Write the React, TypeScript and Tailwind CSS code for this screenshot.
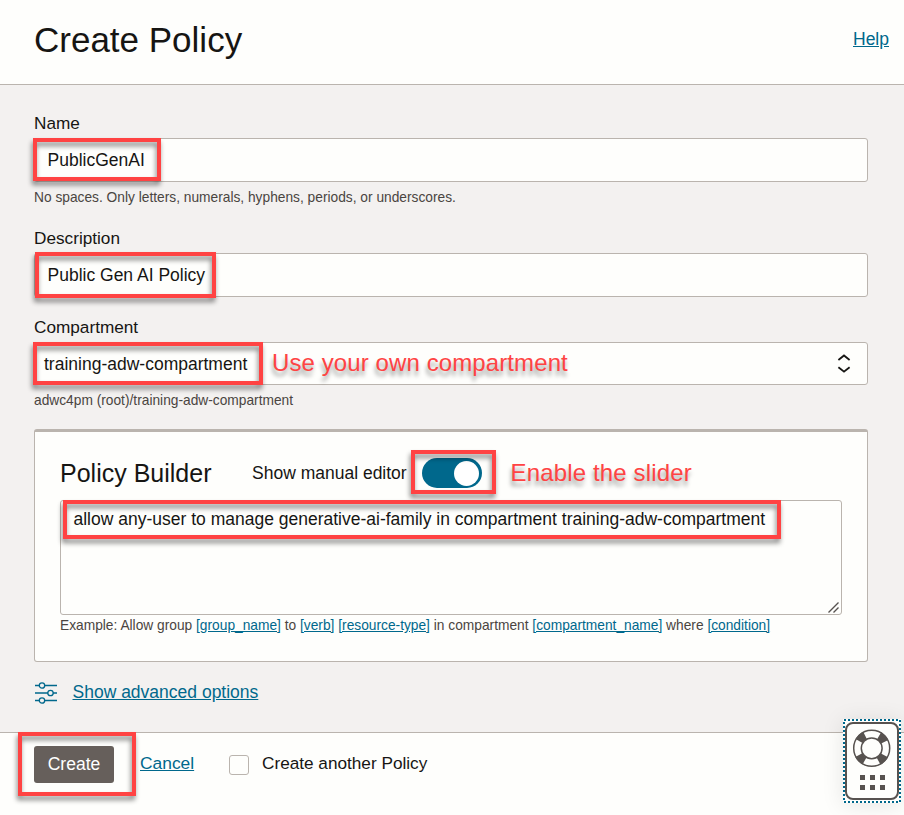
import type { ReactNode } from "react";

function Marker({ className }: { className: string }) {
  return (
    <div
      className={`pointer-events-none absolute border-4 border-[#ff4343] drop-shadow-[-1px_4px_2.5px_rgba(0,0,0,0.48)] ${className}`}
    />
  );
}

function Note({ className, children }: { className: string; children: ReactNode }) {
  return (
    <span
      className={`pointer-events-none absolute text-[24px] leading-7 whitespace-nowrap text-[#ff4343] [text-shadow:-1px_5px_4px_rgba(0,0,0,0.4)] ${className}`}
    >
      {children}
    </span>
  );
}

function Label({ children }: { children: ReactNode }) {
  return <label className="mb-[5px] block text-[17.2px] leading-5">{children}</label>;
}

function Hint({ children }: { children: ReactNode }) {
  return <p className="mt-1.5 text-[13.75px] leading-5 text-[#4a4541]">{children}</p>;
}

function Token({ children }: { children: ReactNode }) {
  return <a className="text-[#00688c] underline">{children}</a>;
}

function HelpWidget() {
  return (
    <div className="absolute top-[719px] left-[843px] h-[84px] w-[58px] shadow-[0_2px_22px_rgba(22,21,19,0.1)]">
      <svg width="58" height="84" viewBox="0 0 58 84" fill="none">
        <rect width="58" height="84" fill="#fefefc" />
        <rect x="1" y="1" width="56" height="82" stroke="#00688c" strokeWidth="2" strokeDasharray="2 2" />
        <rect x="3" y="4" width="52" height="76" rx="7" fill="#fefefc" stroke="#57524f" strokeWidth="2" />
        <circle cx="28.7" cy="29.3" r="14.6" stroke="#57524f" strokeWidth="8" strokeDasharray="8.2 14.73" strokeDashoffset="-7.37" />
        <circle cx="28.7" cy="29.3" r="18" stroke="#57524f" strokeWidth="1.5" />
        <circle cx="28.7" cy="29.3" r="10.4" stroke="#57524f" strokeWidth="1.5" />
        <g fill="#57524f">
          <rect x="17" y="56" width="5" height="5" />
          <rect x="27" y="56" width="5" height="5" />
          <rect x="37" y="56" width="5" height="5" />
          <rect x="17" y="66" width="5" height="5" />
          <rect x="27" y="66" width="5" height="5" />
          <rect x="37" y="66" width="5" height="5" />
        </g>
      </svg>
    </div>
  );
}

export default function App() {
  return (
    <div className="relative flex h-[815px] w-[904px] flex-col overflow-hidden bg-[#fefefc] font-['Liberation_Sans',Arial,sans-serif] text-[17.5px] leading-6 text-[#161513]">
      <header className="flex h-[85px] items-start justify-between border-b border-[#bab4ae] pr-[15px] pl-[34px]">
        <h1 className="mt-5 text-[35px] leading-10">Create Policy</h1>
        <a className="mt-[27px] text-[#00688c] underline">Help</a>
      </header>

      <main className="h-[648px] border-b border-[#bab4ae] bg-[#f3f1f0] px-[34px] pt-7 pr-9">
        <div className="relative">
          <Label>Name</Label>
          <div className="flex h-11 items-center rounded-[3px] border border-[#bab4ae] bg-[#fefefc] px-[12.5px]">PublicGenAI</div>
          <Marker className="top-[25px] -left-px h-[43px] w-32" />
          <Hint>No spaces. Only letters, numerals, hyphens, periods, or underscores.</Hint>
        </div>

        <div className="relative mt-5">
          <Label>Description</Label>
          <div className="flex h-11 items-center rounded-[3px] border border-[#bab4ae] bg-[#fefefc] px-[12.5px]">Public Gen AI Policy</div>
          <Marker className="top-6 left-px h-[46px] w-[181px]" />
        </div>

        <div className="relative mt-5">
          <Label>Compartment</Label>
          <div className="flex h-[43px] items-center justify-between rounded-[3px] border border-[#bab4ae] bg-[#fefefc] pr-4 pl-[9px]">
            <span>training-adw-compartment</span>
            <svg width="14" height="20" viewBox="0 0 14 20" fill="none" stroke="#161513" strokeWidth="1.8">
              <path d="M1.4 6 7 1.5 12.6 6M1.4 13.2 7 17.6l5.6-4.4" />
            </svg>
          </div>
          <Marker className="top-[25px] -left-px h-[43px] w-[230px]" />
          <Note className="top-8 left-[238px] tracking-[0.1px]">Use your own compartment</Note>
          <Hint>adwc4pm (root)/training-adw-compartment</Hint>
        </div>

        <section className="relative mt-[18px] h-[233px] rounded-[3px] border border-t-[3px] border-[#bab4ae] bg-[#fefefc] px-[25px] pt-[26px]">
          <div className="flex h-[30px] items-center">
            <h2 className="w-48 text-[25px] leading-[30px]">Policy Builder</h2>
            <span className="w-[170px]">Show manual editor</span>
            <span className="flex h-[30px] w-[60px] items-center justify-end rounded-full bg-[#00688c] pr-[3px]">
              <span className="size-[25px] rounded-full bg-white" />
            </span>
          </div>
          <div className="mt-3 flex h-[115px] justify-between rounded-[3px] border border-[#bab4ae] pt-1.5 pr-0.5 pl-[12.5px]">
            <span className="whitespace-nowrap">allow any-user to manage generative-ai-family in compartment training-adw-compartment</span>
            <svg className="mb-px self-end" width="11" height="11" viewBox="0 0 11 11" stroke="#57524f" strokeWidth="1.4">
              <path d="M0.5 10.5l10-10M5.5 10.5l5-5" />
            </svg>
          </div>
          <p className="mt-px text-[13.75px] leading-5 whitespace-nowrap text-[#4a4541]">
            Example: Allow group <Token>[group_name]</Token> to <Token>[verb]</Token> <Token>[resource-type]</Token> in
            compartment <Token>[compartment_name]</Token> where <Token>[condition]</Token>
          </p>
          <Marker className="top-[18px] left-[376px] h-11 w-[85px]" />
          <Note className="top-[27px] left-[475.5px] tracking-[0.15px]">Enable the slider</Note>
          <Marker className="top-[68px] left-7 h-[39px] w-[718px]" />
        </section>

        <div className="mt-[18px] flex items-center gap-[15.5px]">
          <svg className="ml-px" width="22" height="24" viewBox="0 0 22 24" fill="none" stroke="#00688c" strokeWidth="1.3">
            <path d="M0 5.5h4M10 5.5h12M0 13h13M18 13h4M0 20.5h4M10 20.5h12" />
            <circle cx="7" cy="5.5" r="2.7" />
            <circle cx="15.5" cy="13" r="2.7" />
            <circle cx="7" cy="20.5" r="2.7" />
          </svg>
          <a className="text-[#00688c] underline">Show advanced options</a>
        </div>
      </main>

      <footer className="relative flex grow items-start pt-[13px] pl-[34px]">
        <button className="h-[37px] w-20 rounded-[3px] bg-[#665f5b] leading-[35px] text-white">Create</button>
        <a className="mt-[5px] ml-[26px] w-[89px] text-[17.4px] text-[#00688c] underline">Cancel</a>
        <span className="mt-[9px] size-5 rounded-[3px] border border-[#bab4ae]" />
        <span className="mt-[5px] ml-[13px] text-[17.2px]">Create another Policy</span>
        <Marker className="-top-px left-[18px] h-16 w-[118px]" />
      </footer>

      <HelpWidget />
    </div>
  );
}
